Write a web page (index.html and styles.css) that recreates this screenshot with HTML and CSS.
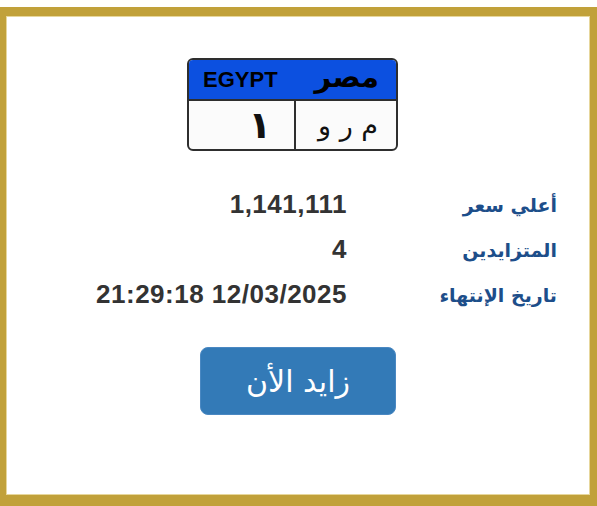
FILE: index.html
```html
<!DOCTYPE html>
<html lang="ar">
<head>
<meta charset="utf-8">
<title>لوحة</title>
<link rel="stylesheet" href="styles.css">
</head>
<body>
<div class="frame">
  <div class="content">
    <div class="plate">
      <div class="plate-head">
        <span class="plate-en">EGYPT</span>
        <span class="plate-ar">مصر</span>
      </div>
      <div class="plate-body">
        <div class="plate-cell plate-num">١</div>
        <div class="plate-cell plate-letters">م ر و</div>
      </div>
    </div>
    <div class="rows">
      <div class="row"><div class="label">أعلي سعر</div><div class="value">1,141,111</div></div>
      <div class="row"><div class="label">المتزايدين</div><div class="value">4</div></div>
      <div class="row"><div class="label">تاريخ الإنتهاء</div><div class="value" dir="ltr">21:29:18 12/03/2025</div></div>
    </div>
    <button class="bid">زايد الأن</button>
  </div>
</div>
</body>
</html>
```
FILE: styles.css
```css
html, body {
  margin: 0;
  padding: 0;
  background: #ffffff;
  overflow: hidden;
}
.frame {
  margin-top: 7px;
  width: 597px;
  height: 499px;
  box-sizing: border-box;
  border-style: solid;
  border-color: #c1a13a;
  border-width: 9px 7px 11px 6px;
  box-shadow: inset 0 0 0 1px #e7d79c;
  background: #ffffff;
}
.content {
  display: flex;
  flex-direction: column;
  align-items: center;
  padding-top: 42px;
}
.plate {
  width: 211px;
  height: 93px;
  box-sizing: border-box;
  border: 2px solid #2e2e2e;
  border-radius: 6px;
  overflow: hidden;
  margin-right: 11px;
  display: flex;
  flex-direction: column;
  background: #fbfbfb;
}
.plate-head {
  height: 39px;
  background: #0c50e0;
  border-bottom: 2px solid #2e2e2e;
  display: flex;
  align-items: center;
  justify-content: space-between;
  padding: 0 17px 0 14px;
  direction: ltr;
}
.plate-en {
  font-family: "Liberation Sans", Arial, sans-serif;
  font-weight: bold;
  font-size: 22px;
  color: #000;
}
.plate-ar {
  font-family: "DejaVu Sans", sans-serif;
  font-weight: bold;
  font-size: 29px;
  color: #000;
  line-height: 1;
  margin-top: -5px;
}
.plate-body {
  flex: 1;
  display: flex;
  direction: ltr;
}
.plate-cell {
  flex: 1;
  display: flex;
  align-items: center;
  justify-content: flex-end;
  padding-right: 20px;
  font-family: "DejaVu Sans", sans-serif;
  color: #111;
}
.plate-num {
  border-right: 2px solid #2e2e2e;
  font-size: 38px;
  font-weight: bold;
  padding-right: 22px;
}
.plate-letters {
  font-size: 27px;
  padding-right: 18px;
  direction: rtl;
  justify-content: flex-start;
}
.rows {
  align-self: stretch;
  direction: rtl;
  padding-right: 33px;
  margin-top: 31px;
}
.row {
  display: flex;
  height: 45px;
  align-items: center;
}
.label {
  width: 210px;
  font-family: "DejaVu Sans", sans-serif;
  font-weight: bold;
  font-size: 19px;
  color: #1d4e8a;
  text-align: right;
}
.value {
  font-family: "Liberation Sans", Arial, sans-serif;
  font-weight: bold;
  font-size: 26px;
  letter-spacing: 0.5px;
  line-height: 45px;
  color: #333333;
}
.bid {
  margin-top: 30px;
  width: 196px;
  height: 68px;
  background: #337ab7;
  border: 1px solid #4a88c2;
  border-radius: 8px;
  color: #ffffff;
  font-family: "DejaVu Sans", sans-serif;
  font-size: 30px;
  padding: 0;
  direction: rtl;
}
```
